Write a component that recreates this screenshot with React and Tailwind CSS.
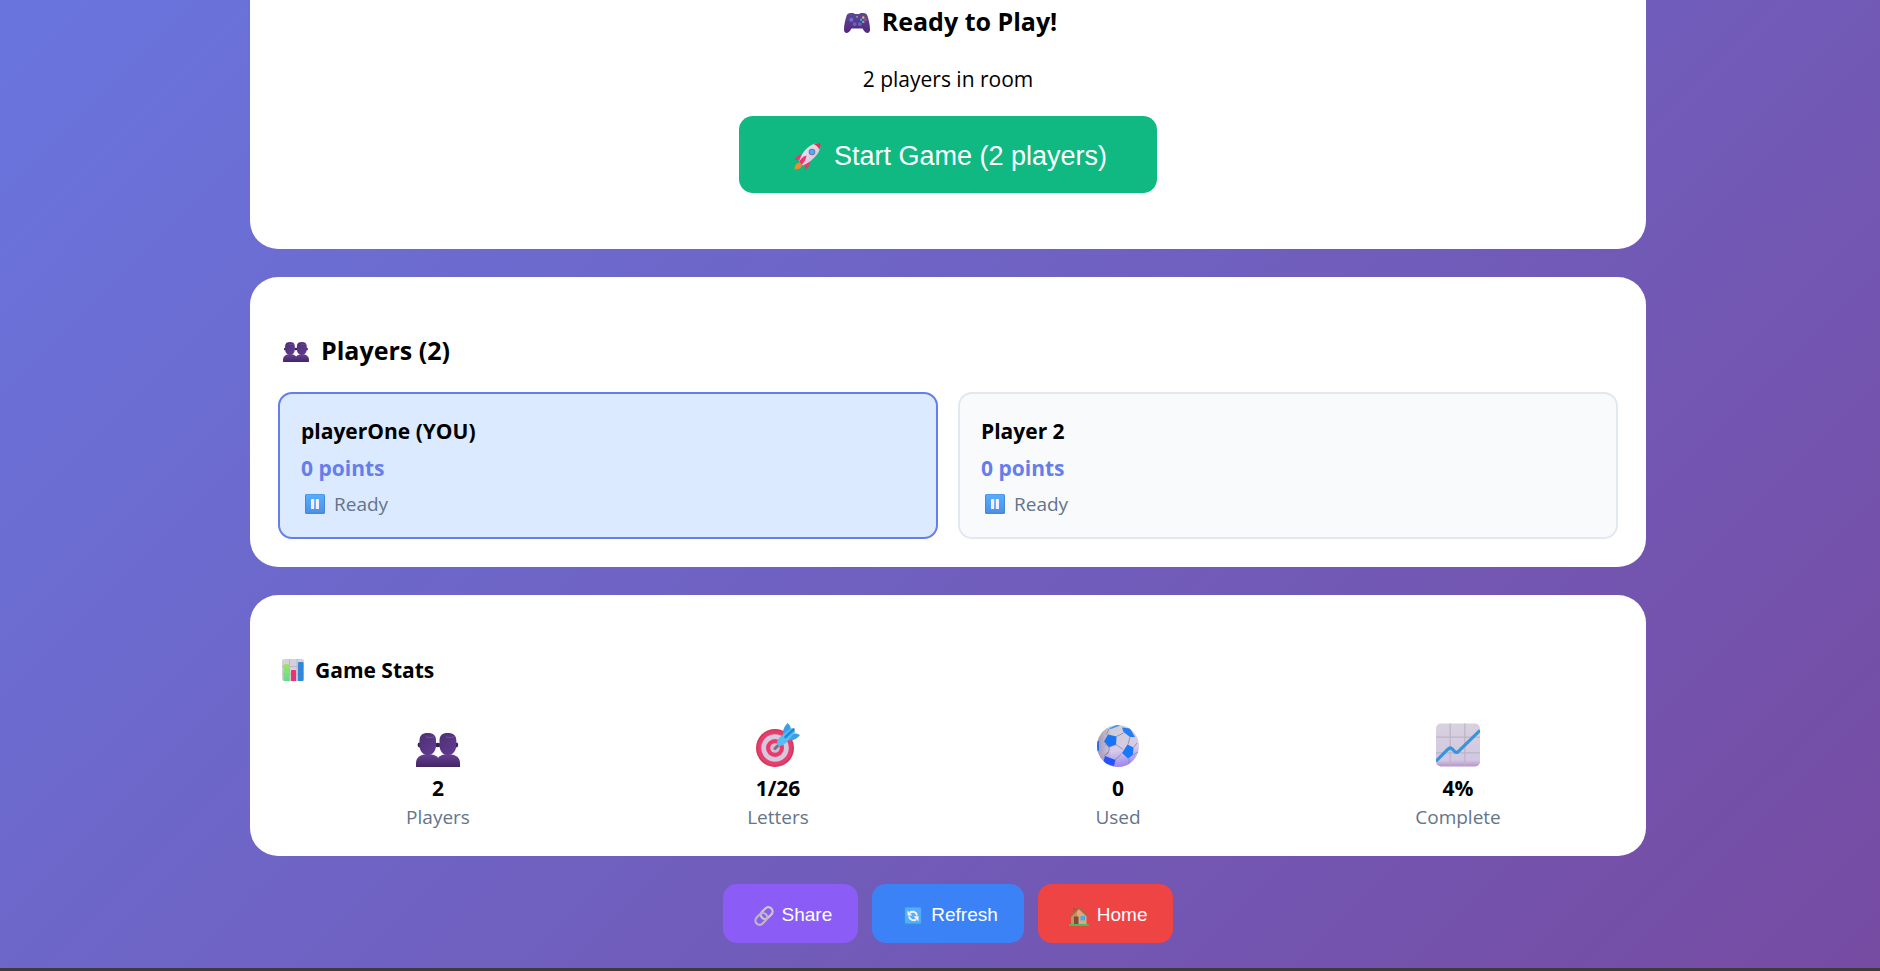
import React from "react";

function Gamepad({ className }) {
  return (
    <svg viewBox="0 0 26 20" className={className} aria-hidden="true">
      <defs>
        <linearGradient id="pad" x1="0" y1="0" x2="0" y2="1">
          <stop offset="0" stopColor="#5b4a94" />
          <stop offset="1" stopColor="#55257f" />
        </linearGradient>
      </defs>
      <path d="M6.500 0h3l1.300 1h4.400l1.300-1h3c2 0 3.300 1 3.900 2.800C24.800 7 26 12 26 16.500c0 2.200-1 3.500-2.700 3.500-2.300 0-3.300-2.300-4.800-4.500h-11C6 17.700 5 20 2.700 20 1 20 0 18.700 0 16.500 0 12 1.200 7 2.600 2.800 3.200 1 4.500 0 6.500 0z" fill="url(#pad)" />
      <circle cx="7.300" cy="6.800" r="2" fill="#6f70cf" />
      <circle cx="10.600" cy="11.200" r="1.900" fill="#6463bd" />
      <circle cx="15.800" cy="11.200" r="1.900" fill="#6463bd" />
      <circle cx="13" cy="3.800" r="1.100" fill="#8c8bb0" />
      <circle cx="19.300" cy="4.500" r="1.200" fill="#f5c33b" />
      <circle cx="17.200" cy="6.700" r="1.200" fill="#36a8f4" />
      <circle cx="21.500" cy="6.700" r="1.200" fill="#f0396b" />
      <circle cx="19.300" cy="8.900" r="1.200" fill="#3fd98a" />
    </svg>
  );
}

function Rocket({ className }) {
  return (
    <svg viewBox="0 0 27 27" className={className} aria-hidden="true">
      <defs>
        <linearGradient id="hull" x1="0" y1="0" x2="1" y2="1">
          <stop offset="0" stopColor="#f4eef8" />
          <stop offset="1" stopColor="#c9bcd2" />
        </linearGradient>
      </defs>
      <path d="M5 19.500c-3 0.500-4.500 3-4.500 7 3.500 0 6.500-1 7.500-4z" fill="#f08a2c" />
      <path d="M9 11.500c-4-0.800-6.800 1.500-8.500 5.500l6-0.300zM15.500 18c0.800 4-1 6.500-4.500 8.500l-0.500-5.500z" fill="#f4336c" />
      <path d="M5 19c1.500-6 5-12 11-16 2-1.400 4.500-2.300 7-2.500l3.300 3.200c-0.300 2.800-1.300 5-2.800 7.300-4 5.500-9.500 9-14.500 11.500z" fill="url(#hull)" />
      <path d="M20 1.200c2-0.800 4-1 6.300-0.800 0.300 2 0 4.300-0.900 6.200-1-2.200-2.900-4.400-5.400-5.400z" fill="#e92f4f" />
      <path d="M5 19c1-2.500 4-5.500 7.500-6.500-0.500 3.500-2 6.500-4.500 9z" fill="#f4336c" />
      <circle cx="18" cy="9" r="3.300" fill="#6d78a8" />
      <circle cx="18" cy="9" r="2.300" fill="#54a8fa" />
    </svg>
  );
}

function People({ className }) {
  return (
    <svg viewBox="0 0 44 34" className={className} aria-hidden="true">
      <defs>
        <linearGradient id="bodies" x1="0" y1="0" x2="0" y2="1">
          <stop offset="0" stopColor="#674098" />
          <stop offset="1" stopColor="#432561" />
        </linearGradient>
        <linearGradient id="heads" x1="0" y1="0" x2="1" y2="1">
          <stop offset="0" stopColor="#4d3175" />
          <stop offset="1" stopColor="#643b91" />
        </linearGradient>
      </defs>
      <path d="M22 34v-9c2-2.500 5.500-4 10-4 7.500 0 12 3.500 12 9v4z" fill="url(#bodies)" />
      <path d="M0 34v-4c0-5.500 4.500-9 12-9s12 3.500 12 9v4z" fill="url(#bodies)" />
      <ellipse cx="3.500" cy="12" rx="1.900" ry="2.400" fill="#3b1e58" />
      <ellipse cx="21.700" cy="12" rx="2.800" ry="2.200" fill="#3b1e58" />
      <ellipse cx="40.300" cy="12" rx="1.900" ry="2.400" fill="#3b1e58" />
      <path d="M3.500 7.500C3.500 2.500 6 0 11.800 0S20 2.500 20 7.500V12c0 6-3.200 10-8.200 10S3.500 18 3.500 12z" fill="url(#heads)" />
      <path d="M23.500 7.500C23.500 2.500 26 0 31.800 0S40.300 2.500 40.300 7.500V12c0 6-3.500 10-8.500 10s-8.300-4-8.300-10z" fill="url(#heads)" />
      <path d="M10 3.800c3 1 6 1 8.500-0.300M30 3.800c3 1 6 1 8.500-0.300" stroke="#7650a3" strokeWidth="1" fill="none" />
    </svg>
  );
}

function Pause({ className }) {
  return (
    <svg viewBox="0 0 20 20" className={className} aria-hidden="true">
      <defs>
        <linearGradient id="key" x1="0" y1="0" x2="0" y2="1">
          <stop offset="0" stopColor="#57aefd" />
          <stop offset="1" stopColor="#4b91ea" />
        </linearGradient>
      </defs>
      <rect width="20" height="20" rx="1.500" fill="#4688dc" />
      <rect x="1" y="0.500" width="18" height="18" rx="1" fill="url(#key)" />
      <rect x="6" y="5" width="3.200" height="10" rx="0.500" fill="#f3efff" />
      <rect x="10.800" y="5" width="3.200" height="10" rx="0.500" fill="#f3efff" />
    </svg>
  );
}

function BarChart({ className }) {
  return (
    <svg viewBox="0 0 22 22" className={className} aria-hidden="true">
      <defs>
        <linearGradient id="green" x1="0" y1="0" x2="0" y2="1">
          <stop offset="0" stopColor="#a0e566" />
          <stop offset="1" stopColor="#62da8c" />
        </linearGradient>
      </defs>
      <rect width="22" height="22" rx="2" fill="#d6cfdd" />
      <path d="M7.500 0v22M15 0v22M0 7.500h22M0 15h22" stroke="#b8b0c1" strokeWidth="0.800" />
      <path d="M1.500 6q0-1 1-1H6q1 0 1 1v16H2.500q-1 0-1-1z" fill="url(#green)" />
      <path d="M9 12q0-1 1-1h3q1 0 1 1v10H9z" fill="#ee3175" />
      <path d="M16 4q0-1 1-1h3.500q1 0 1 1v17q0 1-1 1H16z" fill="#3188d8" />
    </svg>
  );
}

function Target({ className }) {
  return (
    <svg viewBox="0 0 44 44" className={className} aria-hidden="true">
      <circle cx="19" cy="25" r="19" fill="#d83261" />
      <circle cx="19" cy="25" r="17.500" fill="#e63f6b" />
      <circle cx="19" cy="25" r="13.800" fill="#d5c8df" />
      <circle cx="19" cy="25" r="9" fill="#ee3868" />
      <circle cx="19" cy="25" r="4.800" fill="#cbbfd7" />
      <path d="M19 25.500l4-4" stroke="#7b7185" strokeWidth="3" strokeLinecap="round" />
      <path d="M27.500 13c-1.500-4 0-8.500 4-13 2.500 1.500 3.500 4.500 3.500 8l-5 6zM31 16l5-5c3-1 6-0.500 8 1-3 4-8 6.500-12 5z" fill="#3aa0ea" />
      <path d="M21 20c0-4 5-8 9-11L36 5l3.500 3.500L35 14c-3 4-6 8-11 9-2 0-3-1-3-3z" fill="#56bdf2" />
      <path d="M29.500 14l8-7.500" stroke="#2388dd" strokeWidth="2.600" strokeLinecap="round" />
    </svg>
  );
}

function Ball({ className }) {
  return (
    <svg viewBox="0 0 42 42" className={className} aria-hidden="true">
      <defs>
        <linearGradient id="leather" x1="0.400" y1="0" x2="0.600" y2="1">
          <stop offset="0" stopColor="#cfced3" />
          <stop offset="0.600" stopColor="#d6cbe9" />
          <stop offset="1" stopColor="#9c83f3" />
        </linearGradient>
        <linearGradient id="shade" x1="0" y1="0" x2="1" y2="0">
          <stop offset="0" stopColor="#8b7d9c" stopOpacity="0.700" />
          <stop offset="0.350" stopColor="#8b7d9c" stopOpacity="0" />
        </linearGradient>
        <clipPath id="round">
          <circle cx="21" cy="21" r="21" />
        </clipPath>
      </defs>
      <g clipPath="url(#round)">
        <rect width="42" height="42" fill="url(#leather)" />
        <rect width="42" height="42" fill="url(#shade)" />
        <path d="M9.500 9.500L12 4M19.500 11.500l7-3.500M19 19.500l-7 2.500v4M12 26l-5 5M12 22l-4-3M19 19.500l7 5M24.500 29L18 35M32 33.500l0 7.500M36 30l5-3M36.500 22.500L40 18M31 19.500L33 12M12 27l-3 3" stroke="#8d869d" strokeWidth="0.800" fill="none" />
        <path d="M11 9.500l8.500 2-0.500 8-7 2.500-5-5.500z" fill="#1875f8" />
        <path d="M30.500 19.500l6 3-0.700 7.500-4.800 3.500-6-5.500z" fill="#1a79f9" />
        <path d="M25 2.500l8 1 5 8.500-5 0-6.500-5z" fill="#237ef5" />
        <path d="M8 31l10.500 4-1.500 6L6 38z" fill="#2453fb" />
        <path d="M0 16h2v9l-2 3z" fill="#1b6ff3" />
        <path d="M12 3.500L19 0h4l-1 1-8 3z" fill="#3b98f1" />
      </g>
    </svg>
  );
}

function LineChart({ className }) {
  return (
    <svg viewBox="0 0 45 44" className={className} aria-hidden="true">
      <defs>
        <linearGradient id="sheet" x1="0" y1="0" x2="0" y2="1">
          <stop offset="0" stopColor="#d8d2dd" />
          <stop offset="0.850" stopColor="#d3c7e2" />
          <stop offset="1" stopColor="#b494cc" />
        </linearGradient>
      </defs>
      <rect width="45" height="44" rx="5" fill="url(#sheet)" />
      <path d="M14.500 0v43M29.500 0v43M0 14h45M0 30h45" stroke="#bdb4c5" strokeWidth="1.200" />
      <path d="M0 38.500L12.500 26q2-2 4 0l2.500 2.500q2 2 4 0L45 7" stroke="#3595dd" strokeWidth="3.200" fill="none" />
    </svg>
  );
}

function Chain({ className }) {
  return (
    <svg viewBox="0 0 20 20" className={className} aria-hidden="true">
      <g fill="none" strokeWidth="2.300">
        <rect x="6.200" y="2.900" width="13" height="8.400" rx="4.200" transform="rotate(-45 12.700 7.100)" stroke="#cbc7cf" />
        <rect x="0.800" y="8.700" width="13" height="8.400" rx="4.200" transform="rotate(-45 7.300 12.900)" stroke="#bdb5c1" />
      </g>
    </svg>
  );
}

function Cycle({ className }) {
  return (
    <svg viewBox="0 0 18 18" className={className} aria-hidden="true">
      <rect width="18" height="18" rx="1.500" fill="#378de6" />
      <rect x="1" y="0.500" width="16" height="16" rx="1" fill="#55adfa" />
      <path d="M5.800 5.500c2.500-1.600 6.500-1 7.200 3M12.200 12.300c-2.500 1.600-6.500 1-7.200-3" stroke="#f6f4ff" strokeWidth="2" fill="none" />
      <path d="M3.500 3.500v5h5zM14.500 14.300v-5h-5z" fill="#f6f4ff" />
    </svg>
  );
}

function House({ className }) {
  return (
    <svg viewBox="0 0 20 20" className={className} aria-hidden="true">
      <path d="M4 2h3v6H4z" fill="#a8544a" />
      <path d="M2.500 9.500L10 2.500l7.500 7v9h-15z" fill="#dfa878" />
      <path d="M2.500 9.500L8 4.500v14H2.500z" fill="#c98d62" />
      <path d="M0.700 10.800L10 1.800l9.300 9" stroke="#ad6546" strokeWidth="2" fill="none" />
      <rect x="5" y="10.500" width="4.500" height="8" fill="#7d4b3f" />
      <rect x="11.500" y="10" width="4.500" height="4.500" fill="#47a9ee" />
      <path d="M0.500 18h19l0.500 2H0z" fill="#48bd58" />
    </svg>
  );
}

const players = [
  { name: "playerOne (YOU)", points: "0 points", tone: "border-[#667eea] bg-[#dbeafe]" },
  { name: "Player 2", points: "0 points", tone: "border-[#e2e8f0] bg-[#f8fafc]" },
];

const stats = [
  { icon: <People className="h-[34px] w-11" />, value: "2", label: "Players" },
  { icon: <Target className="size-11" />, value: "1/26", label: "Letters" },
  { icon: <Ball className="size-[42px]" />, value: "0", label: "Used" },
  { icon: <LineChart className="size-11" />, value: "4%", label: "Complete" },
];

const actions = [
  { icon: <Chain className="size-5" />, label: "Share", tone: "bg-[#8b5cf6]" },
  { icon: <Cycle className="size-[18px]" />, label: "Refresh", tone: "bg-[#3b82f6]" },
  { icon: <House className="size-5" />, label: "Home", tone: "bg-[#ef4444]" },
];

export default function App() {
  return (
    <div className="flex min-h-screen flex-col bg-linear-[135deg] from-[#6975de] to-[#764ba2] font-['Open_Sans','Noto_Sans',sans-serif] text-black">
      <main className="flex grow flex-col gap-7 pr-[234px] pb-6 pl-[250px]">
        <section className="flex flex-col items-center rounded-b-[28px] bg-white px-7 pt-[3px] pb-14">
          <h2 className="flex items-center gap-3 pl-[5px] text-[25px] leading-9 font-bold">
            <Gamepad className="mt-1 h-5 w-[26px]" />
            Ready to Play!
          </h2>
          <p className="mt-6 text-[21px] leading-8">2 players in room</p>
          <button
            type="button"
            className="mt-[21px] flex h-[77px] items-center gap-[13px] rounded-[14px] bg-[#10b981] pt-1 pr-[50px] pl-[55px] font-['Liberation_Sans',sans-serif] text-[27px] text-white"
          >
            <Rocket className="size-[27px]" />
            Start Game (2 players)
          </button>
        </section>

        <section className="rounded-[28px] bg-white px-7 pt-[55px] pb-7">
          <h2 className="flex items-center gap-3 pl-[5px] text-[25px] leading-9 font-bold">
            <People className="mt-1 h-5 w-[26px]" />
            Players (2)
          </h2>
          <div className="mt-6 grid grid-cols-2 gap-5">
            {players.map((p) => (
              <article key={p.name} className={`rounded-[14px] border-2 px-[21px] pt-[21px] pb-[19px] ${p.tone}`}>
                <h3 className="text-[21px] leading-8 font-bold">{p.name}</h3>
                <p className="mt-[5px] text-[21px] leading-8 font-bold text-[#667eea]">{p.points}</p>
                <p className="mt-1.5 flex items-center gap-[9px] pl-1 text-[19px] leading-7 text-[#64748b]">
                  <Pause className="size-5" />
                  Ready
                </p>
              </article>
            ))}
          </div>
        </section>

        <section className="rounded-[28px] bg-white px-7 pt-[59px] pb-[25px]">
          <h2 className="flex items-center gap-[11px] pl-1 text-[21px] leading-8 font-bold">
            <BarChart className="size-[22px]" />
            Game Stats
          </h2>
          <dl className="mt-9 grid grid-cols-4 gap-5 text-center">
            {stats.map((s) => (
              <div key={s.label} className="flex flex-col items-center">
                <span className="flex h-[45px] items-end">{s.icon}</span>
                <dd className="mt-[7px] text-[21px] leading-7 font-bold">{s.value}</dd>
                <dt className="mt-px text-[19px] leading-7 text-[#64748b]">{s.label}</dt>
              </div>
            ))}
          </dl>
        </section>

        <nav className="flex justify-center gap-3.5" aria-label="Room actions">
          {actions.map((a) => (
            <button
              key={a.label}
              type="button"
              className={`flex h-[59px] items-center gap-2 rounded-[14px] pt-1 pr-[26px] pl-[31px] font-['Liberation_Sans',sans-serif] text-[19px] text-white ${a.tone}`}
            >
              <span className="flex w-5 justify-center">{a.icon}</span>
              {a.label}
            </button>
          ))}
        </nav>
      </main>
      <footer className="h-[3px] bg-[#3c3b40]" />
    </div>
  );
}
